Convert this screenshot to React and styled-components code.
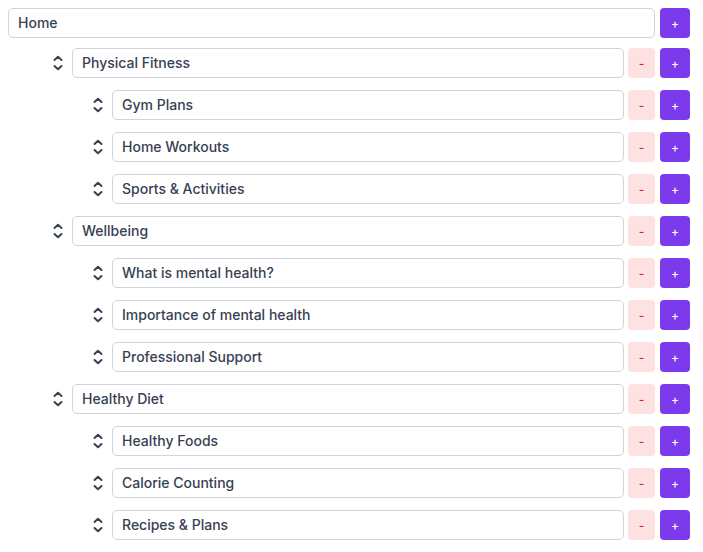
import React from "react";
import styled, { createGlobalStyle } from "styled-components";

const GlobalStyle = createGlobalStyle`
  body {
    margin: 8px;
    font-family: Inter, "Noto Sans", sans-serif;
    background: #ffffff;
  }
`;

const Tree = styled.div`
  width: 682px;
  display: flex;
  flex-direction: column;
`;

const Row = styled.div`
  display: flex;
  align-items: center;
  height: 30px;
  margin-top: ${(p) => (p.$first ? "0" : p.$level === 1 && p.$afterRoot ? "10px" : "12px")};
  padding-left: ${(p) => p.$level * 40}px;
`;

const Handle = styled.span`
  width: 24px;
  height: 30px;
  display: flex;
  align-items: center;
  justify-content: flex-start;
  padding-left: 5px;
  box-sizing: border-box;
  color: #374151;
  cursor: grab;
  flex-shrink: 0;
`;

const Field = styled.input`
  flex: 1;
  min-width: 0;
  height: 30px;
  box-sizing: border-box;
  border: 1px solid #d1d5db;
  border-radius: 5px;
  padding: 0 9px 1px;
  font-family: Inter, "Noto Sans", sans-serif;
  font-size: 14px;
  font-weight: 500;
  color: #374151;
  background: #fff;
  outline: none;
`;

const Button = styled.button`
  height: 30px;
  width: ${(p) => (p.$remove ? "27px" : "30px")};
  margin-left: ${(p) => (p.$remove ? "4px" : "5px")};
  border: none;
  border-radius: 4px;
  padding: 0;
  font-family: Inter, "Noto Sans", sans-serif;
  font-size: 12px;
  font-weight: 500;
  flex-shrink: 0;
  cursor: pointer;
  background: ${(p) => (p.$remove ? "#fee2e2" : "#7c3aed")};
  color: ${(p) => (p.$remove ? "#dc2626" : "#ffffff")};
`;

const items = [
  { label: "Physical Fitness", children: ["Gym Plans", "Home Workouts", "Sports & Activities"] },
  { label: "Wellbeing", children: ["What is mental health?", "Importance of mental health", "Professional Support"] },
  { label: "Healthy Diet", children: ["Healthy Foods", "Calorie Counting", "Recipes & Plans"] },
];

function UpDown() {
  return (
    <svg width="10" height="16" viewBox="0 0 10 16" fill="none" stroke="currentColor" strokeWidth="2" strokeLinecap="round" strokeLinejoin="round">
      <path d="M1.5 5 L5 1.8 L8.5 5" />
      <path d="M1.5 11 L5 14.2 L8.5 11" />
    </svg>
  );
}

function Node({ label, level, afterRoot }) {
  return (
    <Row $level={level} $afterRoot={afterRoot}>
      <Handle>
        <UpDown />
      </Handle>
      <Field defaultValue={label} />
      <Button $remove>-</Button>
      <Button>+</Button>
    </Row>
  );
}

export default function App() {
  return (
    <>
      <GlobalStyle />
      <Tree>
        <Row $first $level={0}>
          <Field defaultValue="Home" />
          <Button>+</Button>
        </Row>
        {items.map((item, i) => (
          <React.Fragment key={item.label}>
            <Node label={item.label} level={1} afterRoot={i === 0} />
            {item.children.map((c) => (
              <Node key={c} label={c} level={2} />
            ))}
          </React.Fragment>
        ))}
      </Tree>
    </>
  );
}
